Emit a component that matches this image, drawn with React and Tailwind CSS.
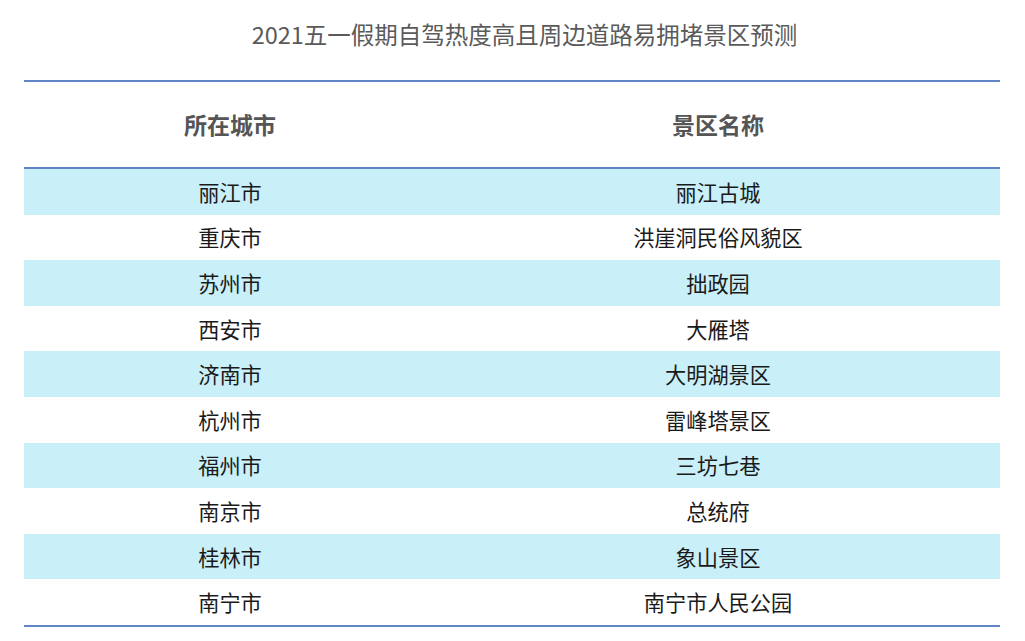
const rows = [
  ['丽江市', '丽江古城'],
  ['重庆市', '洪崖洞民俗风貌区'],
  ['苏州市', '拙政园'],
  ['西安市', '大雁塔'],
  ['济南市', '大明湖景区'],
  ['杭州市', '雷峰塔景区'],
  ['福州市', '三坊七巷'],
  ['南京市', '总统府'],
  ['桂林市', '象山景区'],
  ['南宁市', '南宁市人民公园'],
]

export default function App() {
  return (
    <div
      className="w-[1025px] h-[641px] bg-white overflow-hidden"
      style={{ fontFamily: '"Noto Sans CJK SC", "Noto Sans", sans-serif' }}
    >
      <div className="h-[80px] flex items-center justify-center pb-[11px] pl-[24px]">
        <h1 className="text-[23.5px] font-normal text-[#5a5a5a]">2021五一假期自驾热度高且周边道路易拥堵景区预测</h1>
      </div>
      <div className="mx-[24px] w-[976px] border-t-2 border-b-2 border-[#5f86c4]">
        <div className="flex h-[87px] items-center border-b-2 border-[#5f86c4] text-[23px] font-bold text-[#555555]">
          <div className="w-[412px] text-center">所在城市</div>
          <div className="flex-1 text-center">景区名称</div>
        </div>
        {rows.map(([city, spot], i) => (
          <div
            key={city}
            className={`flex h-[45.6px] items-center text-[21.2px] text-[#1a1a1a] ${i % 2 === 0 ? 'bg-[#c9eff9]' : 'bg-white'}`}
          >
            <div className="w-[412px] text-center">{city}</div>
            <div className="flex-1 text-center">{spot}</div>
          </div>
        ))}
      </div>
    </div>
  )
}
